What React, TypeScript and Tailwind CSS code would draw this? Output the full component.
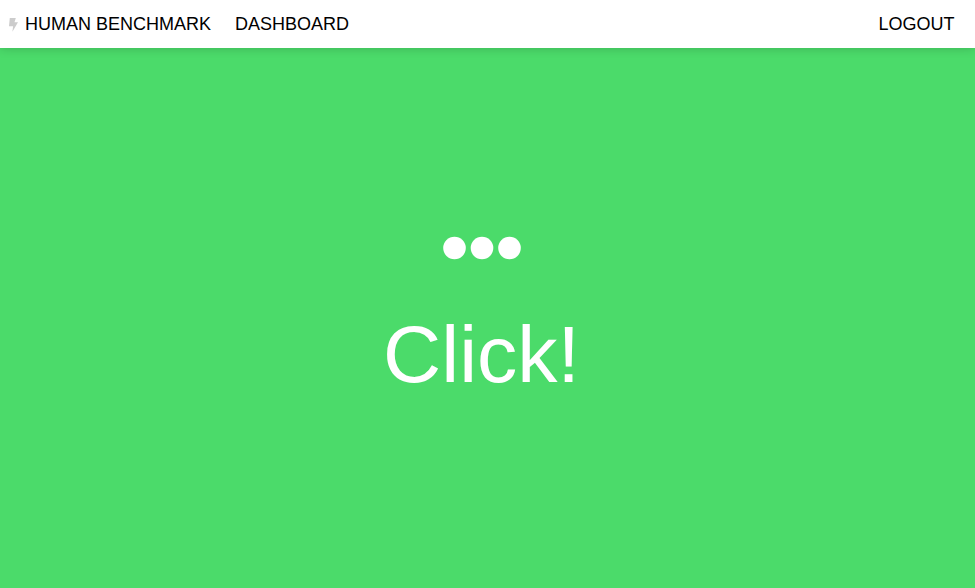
export default function App() {
  return (
    <div className="flex h-screen flex-col overflow-hidden bg-[#4bdb6a] font-['Liberation_Sans',Arial,sans-serif]">
      <header className="z-10 flex h-12 shrink-0 items-center bg-white pr-[20.5px] pl-[9px] text-[18px] leading-[48px] text-black shadow-[0_0_10px_rgba(0,0,0,0.2)]">
        <svg className="mt-[2px] mr-[7px] h-[14px] w-[9px]" viewBox="0 0 9 14" fill="#cccccc">
          <path d="M.8 0H6.8L5.5 4.2H9L3.4 13.8 4.1 8.3H0z" />
        </svg>
        <span>HUMAN BENCHMARK</span>
        <span className="ml-6">DASHBOARD</span>
        <span className="ml-auto">LOGOUT</span>
      </header>
      <main className="flex flex-1 flex-col items-center pt-[188px] pr-[11px] text-white">
        <svg className="h-6 w-[78px]" viewBox="0 0 78 24" fill="currentColor">
          <circle cx="11.5" cy="12" r="11.3" />
          <circle cx="39" cy="12" r="11.3" />
          <circle cx="66.5" cy="12" r="11.3" />
        </svg>
        <h1 className="mt-[48px] mr-[1px] text-[80.5px] leading-[92px]">Click!</h1>
      </main>
    </div>
  );
}
